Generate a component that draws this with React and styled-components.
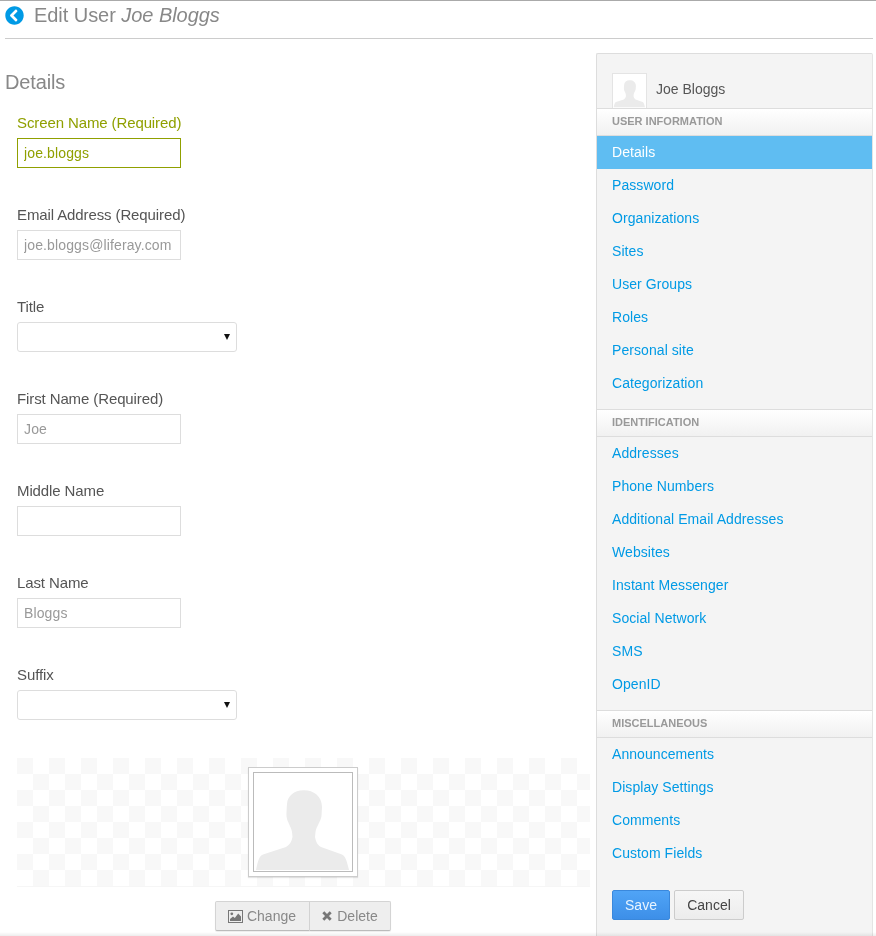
import React from "react";
import styled, { createGlobalStyle } from "styled-components";
import { FaChevronCircleLeft } from "react-icons/fa";

const Global = createGlobalStyle`
  html, body { margin: 0; padding: 0; background: #fff; }
  body { font-family: "Liberation Sans", Arial, sans-serif; font-size: 14px; color: #555; }
`;

const Page = styled.div`
  position: relative;
  width: 876px;
  height: 936px;
  overflow: hidden;
  box-sizing: border-box;
  border-top: 1px solid #aaa;
  padding: 0 3px 0 5px;
  will-change: transform;
`;
const BottomShade = styled.div`
  position: absolute;
  left: 0;
  right: 0;
  bottom: 0;
  height: 4px;
  background: linear-gradient(rgba(0,0,0,0), rgba(0,0,0,0.07));
`;
const Header = styled.header`
  height: 38px;
  box-sizing: border-box;
  border-bottom: 1px solid #ccc;
  display: flex;
  align-items: flex-start;
  gap: 10px;
  padding-top: 3px;
`;
const BackLink = styled.a`
  color: #009ae5;
  font-size: 19px;
  line-height: 22px;
  height: 22px;
  display: flex;
  align-items: center;
`;
const Title = styled.h1`
  margin: 0;
  font-size: 20px;
  font-weight: normal;
  line-height: 22px;
  letter-spacing: -0.05px;
  color: #888;
  em { font-style: italic; }
`;
const Columns = styled.div`
  display: flex;
  justify-content: space-between;
  margin-top: 14px;
`;
const Main = styled.main`
  width: 585px;
`;
const SectionTitle = styled.h2`
  margin: 17px 0 0;
  font-size: 20px;
  font-weight: normal;
  line-height: 24px;
  letter-spacing: -0.15px;
  color: #888;
`;
const Fields = styled.div`
  padding: 0 0 0 12px;
  margin-top: 18px;
`;
const Field = styled.div`
  height: 92px;
`;
const Label = styled.label`
  display: block;
  font-size: 15px;
  line-height: 21px;
  height: 26px;
  letter-spacing: -0.11px;
  color: ${p => (p.$active ? "#90a000" : "#555")};
`;
const Input = styled.input`
  display: block;
  box-sizing: border-box;
  width: 164px;
  height: 30px;
  padding: 0 6px;
  font: 14px "Liberation Sans", Arial, sans-serif;
  letter-spacing: 0.13px;
  color: ${p => (p.$active ? "#90a000" : "#999")};
  border: 1px solid ${p => (p.$active ? "#90a000" : "#ddd")};
  background: #fff;
  outline: none;
  border-radius: 0;
`;
const SelectWrap = styled.div`
  position: relative;
  width: 220px;
  height: 30px;
  &::after {
    content: "";
    position: absolute;
    right: 7px;
    top: 12px;
    border-left: 3px solid transparent;
    border-right: 3px solid transparent;
    border-top: 6px solid #111;
  }
`;
const Select = styled.select`
  display: block;
  appearance: none;
  box-sizing: border-box;
  width: 220px;
  height: 30px;
  font: 14px "Liberation Sans", Arial, sans-serif;
  border: 1px solid #ddd;
  border-radius: 3px;
  background: #fff;
  color: #555;
`;
const Checker = styled.div`
  margin-left: 12px;
  margin-top: 2px;
  height: 129px;
  box-sizing: border-box;
  border-bottom: 1px solid #f6f6f6;
  background: conic-gradient(#fff 25%, #f8f8f8 0 50%, #fff 0 75%, #f8f8f8 0) 0 0 / 32px 32px;
  display: flex;
  justify-content: center;
  padding-top: 9px;
`;
const PhotoFrame = styled.div`
  width: 110px;
  height: 110px;
  box-sizing: border-box;
  border: 1px solid #ccc;
  padding: 4px;
  background: #fff;
  box-shadow: 0 1px 1px rgba(0,0,0,0.1);
  margin-left: -1px;
`;
const PhotoInner = styled.div`
  box-sizing: border-box;
  width: 100px;
  height: 100px;
  border: 1px solid #bbb;
  background: #fff;
  svg { display: block; width: 98px; height: 98px; }
`;
const ButtonRow = styled.div`
  display: flex;
  justify-content: center;
  margin: 14px 2px 0 12px;
`;
const GroupButton = styled.button`
  display: flex;
  align-items: center;
  justify-content: center;
  gap: ${p => (p.$joined ? 5 : 4)}px;
  box-sizing: border-box;
  width: ${p => p.$w}px;
  height: 30px;
  padding: ${p => (p.$joined ? "0 0 0 1px" : "0")};
  font: 14px "Liberation Sans", Arial, sans-serif;
  letter-spacing: 0.03px;
  color: #888;
  background: #eee;
  border: 1px solid #d4d4d4;
  border-bottom: 1px solid #bbb;
  border-left-width: ${p => (p.$joined ? 0 : 1)}px;
  border-radius: ${p => (p.$joined ? "0 2px 2px 0" : "2px 0 0 2px")};
  box-shadow: 0 1px 1px rgba(0,0,0,0.08);
  svg { display: block; }
`;
const Sidebar = styled.aside`
  width: 277px;
  height: 900px;
  box-sizing: border-box;
  background: #f4f4f4;
  border: 1px solid #ddd;
  border-right-color: #e4e4e4;
  border-radius: 2px 2px 0 0;
  flex-shrink: 0;
`;
const Profile = styled.div`
  display: flex;
  align-items: flex-start;
  gap: 9px;
  padding: 19px 0 0 15px;
  height: 35px;
  color: #555;
  font-size: 14px;
`;
const ProfileName = styled.span`
  line-height: 33px;
`;
const Avatar = styled.div`
  width: 35px;
  height: 35px;
  box-sizing: border-box;
  border: 1px solid #e4e4e4;
  border-bottom: 0;
  background: #fff;
  overflow: hidden;
  svg { display: block; width: 33px; height: 34px; }
`;
const SectionHead = styled.div`
  height: 28px;
  box-sizing: border-box;
  border-top: 1px solid #ddd;
  border-bottom: 1px solid #ddd;
  background: linear-gradient(#fff, #f1f1f1);
  padding-left: 15px;
  font-size: 11px;
  font-weight: bold;
  line-height: 24px;
  color: #999;
  text-transform: uppercase;
`;
const NavList = styled.ul`
  list-style: none;
  margin: 0;
  padding: 0 0 9px;
`;
const NavItem = styled.li`
  height: 33px;
  line-height: 33px;
  padding-left: 15px;
  font-size: 14px;
  letter-spacing: 0.07px;
  color: ${p => (p.$selected ? "#fff" : "#009ae5")};
  background: ${p => (p.$selected ? "#5fbdf2" : "transparent")};
`;
const Actions = styled.div`
  display: flex;
  gap: 4px;
  padding: 11px 0 0 15px;
`;
const Primary = styled.button`
  width: 58px;
  height: 30px;
  box-sizing: border-box;
  font: 14px "Liberation Sans", Arial, sans-serif;
  color: #e8f4ff;
  background: linear-gradient(#50a4f6, #3d8fe8);
  border: 1px solid #3a88dc;
  border-radius: 2px;
  padding: 0;
`;
const Secondary = styled.button`
  width: 70px;
  height: 30px;
  box-sizing: border-box;
  font: 14px "Liberation Sans", Arial, sans-serif;
  color: #444;
  background: linear-gradient(#f6f6f6, #ececec);
  border: 1px solid #ccc;
  border-radius: 2px;
  padding: 0;
`;

const silhouette = "M49.5 17.3C59 17 68 23 68 34C68 37 67.5 40 67.5 43C66.5 49 62.5 53 61.5 59L61 64C62 69 63.5 72 67 74L88 81.5C91 83 92.5 86 95 97H2C4 88 5 83 9 81.5L32 74C35.5 72 37.5 69 38.5 64L38 59C37 53 33 49 32.5 43C32.5 40 32.5 37 33 31C33.5 23 40 17.5 49.5 17.3Z";

const Person = () => (
  <svg viewBox="0 0 98 98" aria-hidden="true">
    <path d={silhouette} fill="#ebebeb" />
  </svg>
);

const PictureIcon = () => (
  <svg width="15" height="13" viewBox="0 0 15 13" aria-hidden="true">
    <rect x="0.5" y="0.5" width="14" height="12" fill="none" stroke="#777" />
    <circle cx="3.8" cy="3.8" r="1.4" fill="#777" />
    <path d="M2 11V9L5 6.5L6.8 8L10.2 3.5L13 6.5V11Z" fill="#777" />
  </svg>
);

const RemoveIcon = () => (
  <svg width="10" height="10" viewBox="0 0 10 10" aria-hidden="true">
    <path d="M1.3 1.3L8.7 8.7M8.7 1.3L1.3 8.7" stroke="#777" strokeWidth="2.8" />
  </svg>
);

const sections = [
  ["User Information", ["Details", "Password", "Organizations", "Sites", "User Groups", "Roles", "Personal site", "Categorization"]],
  ["Identification", ["Addresses", "Phone Numbers", "Additional Email Addresses", "Websites", "Instant Messenger", "Social Network", "SMS", "OpenID"]],
  ["Miscellaneous", ["Announcements", "Display Settings", "Comments", "Custom Fields"]],
];

export default function App() {
  return (
    <Page>
      <Global />
      <Header>
        <BackLink><FaChevronCircleLeft /></BackLink>
        <Title>Edit User <em>Joe Bloggs</em></Title>
      </Header>
      <Columns>
        <Main>
          <SectionTitle>Details</SectionTitle>
          <Fields>
            <Field>
              <Label $active>Screen Name (Required)</Label>
              <Input $active defaultValue="joe.bloggs" />
            </Field>
            <Field>
              <Label>Email Address (Required)</Label>
              <Input defaultValue="joe.bloggs@liferay.com" />
            </Field>
            <Field>
              <Label>Title</Label>
              <SelectWrap><Select><option></option></Select></SelectWrap>
            </Field>
            <Field>
              <Label>First Name (Required)</Label>
              <Input defaultValue="Joe" />
            </Field>
            <Field>
              <Label>Middle Name</Label>
              <Input />
            </Field>
            <Field>
              <Label>Last Name</Label>
              <Input defaultValue="Bloggs" />
            </Field>
            <Field>
              <Label>Suffix</Label>
              <SelectWrap><Select><option></option></Select></SelectWrap>
            </Field>
          </Fields>
          <Checker>
            <PhotoFrame><PhotoInner><Person /></PhotoInner></PhotoFrame>
          </Checker>
          <ButtonRow>
            <GroupButton $w={95}><PictureIcon /> Change</GroupButton>
            <GroupButton $w={81} $joined><RemoveIcon /> Delete</GroupButton>
          </ButtonRow>
        </Main>
        <Sidebar>
          <Profile>
            <Avatar><Person /></Avatar>
            <ProfileName>Joe Bloggs</ProfileName>
          </Profile>
          {sections.map(([head, items]) => (
            <div key={head}>
              <SectionHead>{head}</SectionHead>
              <NavList>
                {items.map(item => (
                  <NavItem key={item} $selected={item === "Details"}>{item}</NavItem>
                ))}
              </NavList>
            </div>
          ))}
          <Actions>
            <Primary>Save</Primary>
            <Secondary>Cancel</Secondary>
          </Actions>
        </Sidebar>
      </Columns>
      <BottomShade />
    </Page>
  );
}
